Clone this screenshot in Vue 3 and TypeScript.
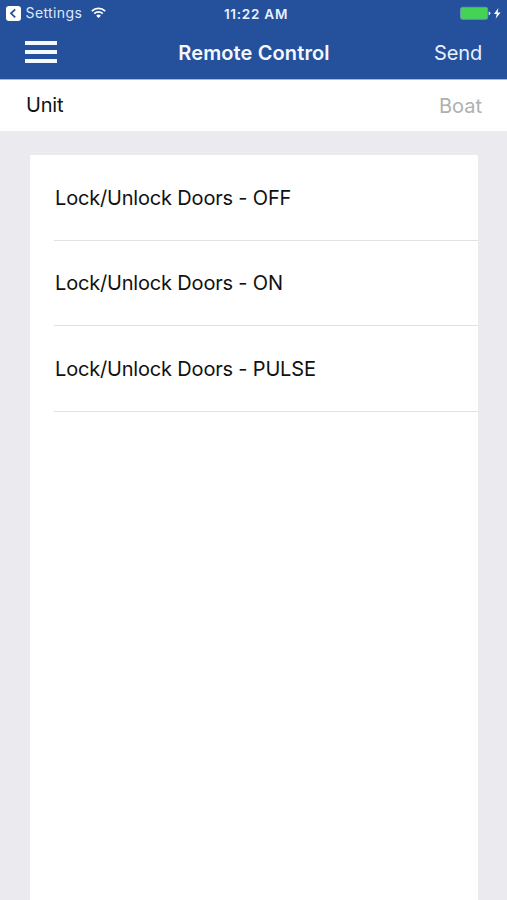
<script setup lang="ts">
import { ref } from 'vue'

interface Command {
  id: number
  label: string
}

const unit = ref<string>('Boat')
const commands = ref<Command[]>([
  { id: 1, label: 'Lock/Unlock Doors - OFF' },
  { id: 2, label: 'Lock/Unlock Doors - ON' },
  { id: 3, label: 'Lock/Unlock Doors - PULSE' },
])
</script>

<template>
  <div class="screen">
    <header class="header">
      <div class="status">
        <div class="status-left">
          <svg class="back" viewBox="0 0 15 15" width="15" height="15">
            <rect width="15" height="15" rx="3" fill="#fff" />
            <path d="M9.2 3.3 5 7.3l4.2 4" fill="none" stroke="#24509c" stroke-width="1.8" />
          </svg>
          <span class="settings">Settings</span>
          <svg class="wifi" viewBox="0 0 16 12" width="15" height="11.5">
            <g fill="none" stroke="#fff" stroke-width="1.9">
              <path d="M.9 4.3a10.1 10.1 0 0 1 14.2 0" />
              <path d="M3.5 6.9a6.4 6.4 0 0 1 9 0" />
            </g>
            <path d="M8 11.6 5.5 9.1a3.6 3.6 0 0 1 5 0z" fill="#fff" />
          </svg>
        </div>
        <span class="time">11:22 AM</span>
        <svg class="battery" viewBox="0 0 43 14" width="43" height="14">
          <rect x=".5" y="1.3" width="27.2" height="12" rx="2" fill="#44d455" stroke="#6a93b4" />
          <path d="M28.7 5.4q1.7.2 1.7 1.9t-1.7 1.9z" fill="#dce8f8" />
          <path d="M38.4 1.9 34 7.9h2.8l-1.2 4.9 5-6.3h-3z" fill="#fff" />
        </svg>
      </div>
      <nav class="nav">
        <button class="menu" aria-label="Menu"><i /><i /><i /></button>
        <h1 class="title">Remote Control</h1>
        <button class="send">Send</button>
      </nav>
    </header>
    <section class="unit">
      <span class="unit-label">Unit</span>
      <span class="unit-value">{{ unit }}</span>
    </section>
    <main class="body">
      <ul class="card">
        <li v-for="c in commands" :key="c.id" class="row"><span>{{ c.label }}</span></li>
      </ul>
    </main>
  </div>
</template>

<style>
body {
  margin: 0;
}
</style>

<style scoped>
.screen {
  display: flex;
  flex-direction: column;
  width: 507px;
  height: 900px;
  overflow: hidden;
  background: #eaeaef;
  font-family: Inter, "Liberation Sans", sans-serif;
  color: #111;
}
.header {
  box-sizing: border-box;
  height: 80px;
  background: #24509c;
  border-bottom: 1px solid #a4badb;
  color: #fff;
}
.status {
  display: grid;
  grid-template-columns: 1fr auto 1fr;
  align-items: center;
  height: 27px;
  padding: 0 4px 0 6px;
}
.status-left {
  display: flex;
  align-items: center;
}
.settings {
  margin-left: 4.5px;
  font-size: 14px;
  line-height: 16px;
  padding-bottom: 1px;
  letter-spacing: 0.4px;
  color: #dfe9fa;
}
.wifi {
  margin-left: 9px;
  margin-bottom: 1px;
}
.time {
  padding-left: 3px;
  font-size: 13.5px;
  font-weight: 600;
  letter-spacing: 0.75px;
  color: #e9f1ff;
}
.battery {
  justify-self: end;
  margin-bottom: 1px;
}
.nav {
  display: grid;
  grid-template-columns: 1fr auto 1fr;
  align-items: center;
  height: 50px;
  padding: 0 25px;
}
button {
  padding: 0;
  border: 0;
  background: none;
  color: inherit;
  font: inherit;
}
.menu {
  display: flex;
  flex-direction: column;
  gap: 5px;
  width: 32px;
}
.menu i {
  height: 4px;
  background: #f4f8ff;
}
.title {
  margin: 0;
  padding: 1px 0 0 1px;
  font-size: 20px;
  font-weight: 600;
  letter-spacing: 0.12px;
  color: #f4f8ff;
}
.send {
  justify-self: end;
  padding-top: 2px;
  font-size: 20px;
  letter-spacing: -0.15px;
  color: #e9f1ff;
}
.unit {
  display: flex;
  align-items: center;
  justify-content: space-between;
  box-sizing: border-box;
  height: 51px;
  padding: 0 25px 0 26px;
  background: #fff;
  font-size: 20px;
}
.unit-label {
  padding-bottom: 2px;
  letter-spacing: -0.2px;
}
.unit-value {
  color: #b0b0b0;
}
.body {
  flex: 1;
  display: flex;
  padding: 24px 29px 0 30px;
}
.card {
  flex: 1;
  margin: 0;
  padding: 0 0 0 24px;
  list-style: none;
  background: #fff;
  border-radius: 1px 1px 0 0;
}
.row {
  display: flex;
  align-items: center;
  box-sizing: border-box;
  height: 85.5px;
  padding: 1.4px 0 0 1px;
  border-bottom: 1px solid #e2e2e5;
  font-size: 20px;
  letter-spacing: -0.18px;
}
</style>
